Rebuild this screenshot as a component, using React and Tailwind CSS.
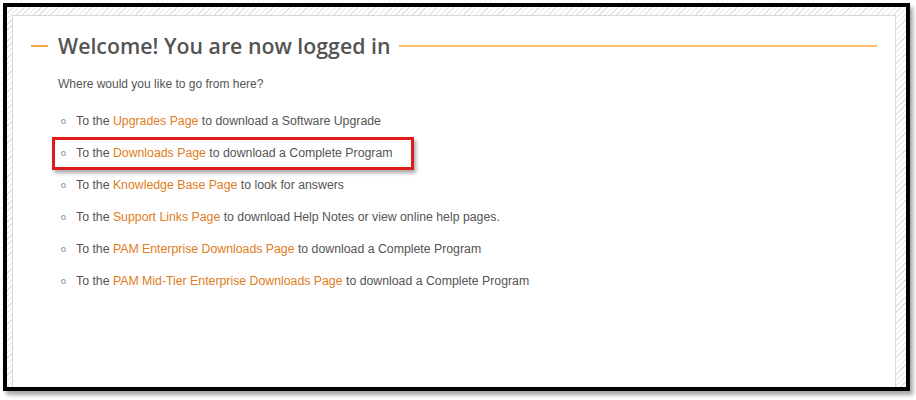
import React from 'react';

const links = [
    { pre: 'To the ', link: 'Upgrades Page', post: ' to download a Software Upgrade' },
    { pre: 'To the ', link: 'Downloads Page', post: ' to download a Complete Program', marked: true },
    { pre: 'To the ', link: 'Knowledge Base Page', post: ' to look for answers' },
    { pre: 'To the ', link: 'Support Links Page', post: ' to download Help Notes or view online help pages.' },
    { pre: 'To the ', link: 'PAM Enterprise Downloads Page', post: ' to download a Complete Program' },
    { pre: 'To the ', link: 'PAM Mid-Tier Enterprise Downloads Page', post: ' to download a Complete Program' },
];

const App = () => {
    return (
        <div className="w-[916px] h-[400px] bg-white pt-[3px] pl-[3px] overflow-hidden">
            {/* Framed screenshot */}
            <div className="w-[907px] h-[388px] border-4 border-black shadow-[3px_4px_4px_rgba(0,0,0,0.35)] overflow-hidden pt-[8px] pl-[5px] pr-[10px] bg-[repeating-linear-gradient(135deg,#e2e2e2_0px,#e2e2e2_1px,#ffffff_1px,#ffffff_4px)]">
                <div className="h-[400px] bg-white border border-[#d8d8d8] pt-[18px]" style={{ fontFamily: '"Liberation Sans", Arial, sans-serif' }}>
                    {/* Title */}
                    <div className="flex items-center pl-[18px] pr-[18px]">
                        <span className="w-[17px] h-[2px] bg-[#f5a742]"></span>
                        <h1 className="ml-[10px] mr-[9px] text-[21.3px] leading-[24px] font-semibold text-[#545454]" style={{ fontFamily: '"Open Sans", sans-serif' }}>
                            Welcome! You are now logged in
                        </h1>
                        <span className="flex-1 h-[2px] bg-[#f9bf6e]"></span>
                    </div>

                    <div className="pl-[45px] text-[#555555]">
                        <p className="mt-[17px] leading-[18px] text-[12px]">Where would you like to go from here?</p>

                        <ul className="mt-[12px] text-[12.3px]">
                            {links.map((item, i) => (
                                <li key={i} className="relative flex items-center h-[32px]">
                                    <span className="w-[5px] h-[5px] rounded-full border border-[#8a8a8a] ml-[3px] mr-[10px]"></span>
                                    <span>
                                        {item.pre}
                                        <a className="text-[#de7d22]">{item.link}</a>
                                        {item.post}
                                    </span>
                                    {item.marked && (
                                        <span className="absolute left-[-6px] top-0 w-[362px] h-[33px] border-[3px] border-[#e01b1b] shadow-[2px_3px_4px_rgba(0,0,0,0.35)]"></span>
                                    )}
                                </li>
                            ))}
                        </ul>
                    </div>
                </div>
            </div>
        </div>
    );
}

export default App;
